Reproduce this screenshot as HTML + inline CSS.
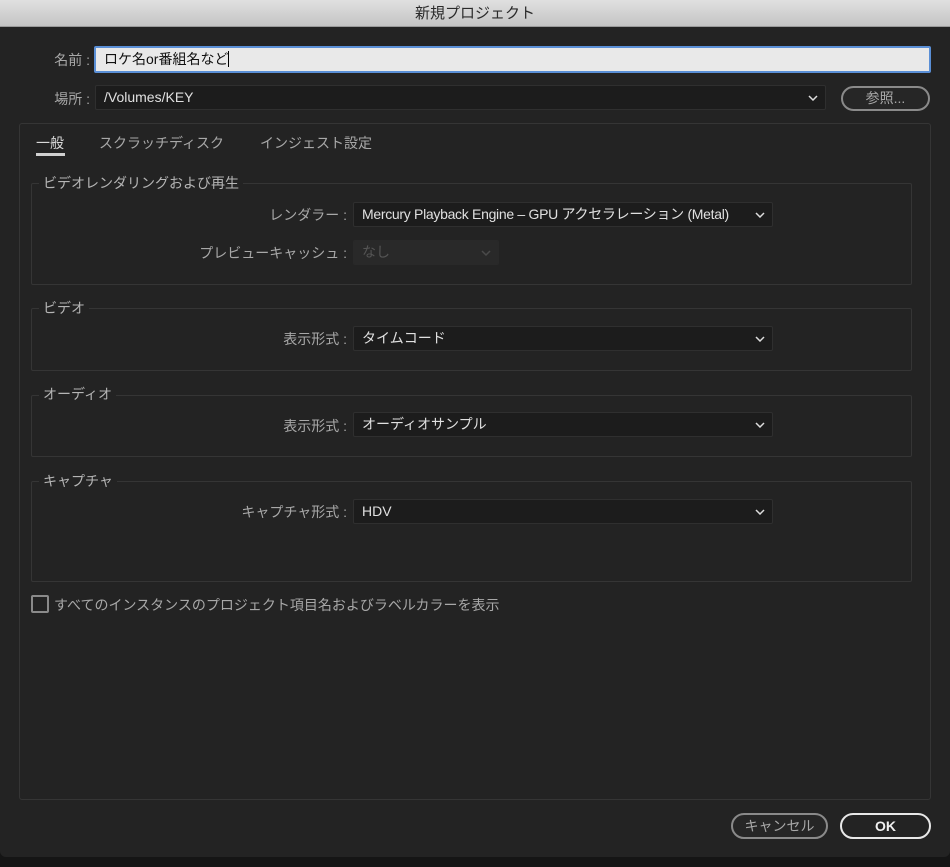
<!DOCTYPE html>
<html><head><meta charset="utf-8"><style>
*{box-sizing:border-box;margin:0;padding:0}
body{width:950px;height:867px;background:#151515;font-family:"Liberation Sans","Noto Sans CJK JP",sans-serif;font-size:14px;color:#bdbdbd;position:relative;overflow:hidden}
.dlg{position:absolute;left:0;top:0;width:950px;height:857px;background:#232323;border-radius:0 0 6px 6px}
.title{position:absolute;left:0;top:0;width:950px;height:27px;background:linear-gradient(#e0e0e0,#c4c4c4);border-bottom:1px solid #9a9a9a;text-align:center;line-height:27px;color:#2a2a2a;font-size:15px}
.a{position:absolute}
.lbl{position:absolute;text-align:right;color:#a8a8a8;white-space:nowrap}
.dd{position:absolute;background:#1c1c1c;border:1px solid #2f2f2f;border-radius:2px;color:#e0e0e0;padding-left:8px;white-space:nowrap}
.dd svg{position:absolute;right:7px;top:50%;margin-top:-3px}
.grp{position:absolute;border:1px solid #353535;border-radius:2px}
.gt{position:absolute;background:#232323;padding:0 4px;color:#b5b5b5;white-space:nowrap}
.btn{position:absolute;border:2px solid #8a8a8a;border-radius:13px;text-align:center;color:#a8a8a8;background:#262626}
</style></head><body>
<div class="dlg">
<div class="title">新規プロジェクト</div>
<div class="lbl" style="left:20px;width:70px;top:50px">名前 :</div>
<div class="a" style="left:94px;top:46px;width:837px;height:27px;background:#e9e9e9;border:2px solid #5a8fd6;border-radius:2px;color:#111;font-size:14px;line-height:23px;padding-left:8px">ロケ名or番組名など<span style="display:inline-block;width:1px;height:16px;background:#000;vertical-align:-3px"></span></div>
<div class="lbl" style="left:20px;width:70px;top:89px">場所 :</div>
<div class="dd" style="left:95px;top:85px;width:731px;height:25px;line-height:23px">/Volumes/KEY<svg width="10" height="6"><path d="M1 1L5 5L9 1" stroke="#ddd" stroke-width="1.5" fill="none"/></svg></div>
<div class="btn" style="left:841px;top:86px;width:89px;height:25px;line-height:21px">参照...</div>

<div class="a" style="left:19px;top:123px;width:912px;height:677px;border:1px solid #353535;border-radius:3px"></div>
<div class="a" style="left:36px;top:133px;color:#d8d8d8">一般</div>
<div class="a" style="left:36px;top:153px;width:29px;height:3px;background:#d0d0d0"></div>
<div class="a" style="left:99px;top:133px;color:#a8a8a8">スクラッチディスク</div>
<div class="a" style="left:260px;top:133px;color:#a8a8a8">インジェスト設定</div>

<div class="grp" style="left:31px;top:183px;width:881px;height:102px"></div>
<div class="gt" style="left:39px;top:173px">ビデオレンダリングおよび再生</div>
<div class="lbl" style="left:150px;width:197px;top:205px">レンダラー :</div>
<div class="dd" style="left:353px;top:202px;width:420px;height:25px;line-height:23px;letter-spacing:-0.3px">Mercury Playback Engine – GPU アクセラレーション (Metal)<svg width="10" height="6"><path d="M1 1L5 5L9 1" stroke="#ddd" stroke-width="1.5" fill="none"/></svg></div>
<div class="lbl" style="left:150px;width:197px;top:243px">プレビューキャッシュ :</div>
<div class="dd" style="left:353px;top:240px;width:146px;height:25px;line-height:23px;background:#292929;border-color:#292929;color:#555">なし<svg width="10" height="6"><path d="M1 1L5 5L9 1" stroke="#4a4a4a" stroke-width="1.5" fill="none"/></svg></div>

<div class="grp" style="left:31px;top:308px;width:881px;height:63px"></div>
<div class="gt" style="left:39px;top:298px">ビデオ</div>
<div class="lbl" style="left:150px;width:197px;top:329px">表示形式 :</div>
<div class="dd" style="left:353px;top:326px;width:420px;height:25px;line-height:23px">タイムコード<svg width="10" height="6"><path d="M1 1L5 5L9 1" stroke="#ddd" stroke-width="1.5" fill="none"/></svg></div>

<div class="grp" style="left:31px;top:395px;width:881px;height:62px"></div>
<div class="gt" style="left:39px;top:384px">オーディオ</div>
<div class="lbl" style="left:150px;width:197px;top:416px">表示形式 :</div>
<div class="dd" style="left:353px;top:412px;width:420px;height:25px;line-height:23px">オーディオサンプル<svg width="10" height="6"><path d="M1 1L5 5L9 1" stroke="#ddd" stroke-width="1.5" fill="none"/></svg></div>

<div class="grp" style="left:31px;top:481px;width:881px;height:101px"></div>
<div class="gt" style="left:39px;top:471px">キャプチャ</div>
<div class="lbl" style="left:150px;width:197px;top:502px">キャプチャ形式 :</div>
<div class="dd" style="left:353px;top:499px;width:420px;height:25px;line-height:23px">HDV<svg width="10" height="6"><path d="M1 1L5 5L9 1" stroke="#ddd" stroke-width="1.5" fill="none"/></svg></div>

<div class="a" style="left:31px;top:595px;width:18px;height:18px;border:2px solid #8a8a8a;border-radius:2px"></div>
<div class="a" style="left:54px;top:595px;color:#a8a8a8">すべてのインスタンスのプロジェクト項目名およびラベルカラーを表示</div>

<div class="btn" style="left:731px;top:813px;width:97px;height:26px;line-height:22px">キャンセル</div>
<div class="btn" style="left:840px;top:813px;width:91px;height:26px;line-height:22px;border-color:#e8e8e8;color:#f0f0f0;background:#232323;font-weight:bold">OK</div>
</div>
</body></html>
